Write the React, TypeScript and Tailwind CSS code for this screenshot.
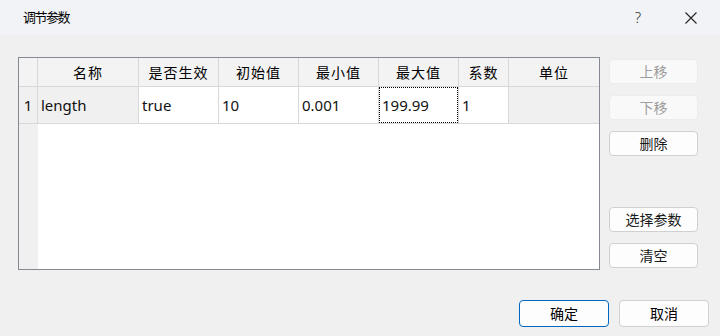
const font = "font-['Noto_Sans','Noto_Sans_CJK_SC',sans-serif]"

const cols = [
  { title: "", w: "w-[19px]" },
  { title: "名称", w: "w-[101px]" },
  { title: "是否生效", w: "w-[80px]" },
  { title: "初始值", w: "w-[80px]" },
  { title: "最小值", w: "w-[80px]" },
  { title: "最大值", w: "w-[80px]" },
  { title: "系数", w: "w-[50px]" },
  { title: "单位", w: "w-[90px]" },
]

const SideButton = ({ label, disabled }: { label: string; disabled?: boolean }) => {
  return (
    <div
      className={
        disabled
          ? "h-[25px] w-[89px] rounded-[4px] border border-[#ececec] bg-[#f9f9f9] text-[#9e9e9e] flex items-center justify-center text-[14px]"
          : "h-[25px] w-[89px] rounded-[4px] border border-[#d0d0d0] bg-[#fdfdfd] text-[#1a1a1a] flex items-center justify-center text-[14px]"
      }
    >
      {label}
    </div>
  )
}

const App = () => {
  return (
    <div className={"w-[720px] h-[336px] bg-[#f0f0f0] flex flex-col text-black " + font}>
      <div className="h-[35px] bg-[#f2f3f7] flex items-center pl-[23px] pr-[23px]">
        <span className="text-[13px] tracking-[-1.5px]">调节参数</span>
        <span className="ml-auto text-[15px] text-[#333] font-light">?</span>
        <svg className="ml-[44px]" width="12" height="12" viewBox="0 0 12 12">
          <path d="M0.5 0.5 L11.5 11.5 M11.5 0.5 L0.5 11.5" stroke="#222" strokeWidth="1.1" />
        </svg>
      </div>

      <div className="flex pl-[18px] pt-[22px]">
        <div className="w-[582px] h-[213px] border border-[#858a92] bg-white flex flex-col">
          <div className="flex h-[29px] bg-[#f3f3f3] border-b border-[#d8d8d8] text-[14px] tracking-[1px]">
            {cols.map((c, i) => (
              <div key={i} className={c.w + " h-full flex items-center justify-center " + (i < cols.length - 1 ? "border-r border-[#d8d8d8]" : "")}>
                {c.title}
              </div>
            ))}
          </div>
          <div className="flex h-[37px] border-b border-[#d8d8d8] text-[15px] text-[#111]">
            <div className="w-[19px] bg-[#f0f0f0] border-r border-[#d8d8d8] flex items-center justify-center">1</div>
            <div className="w-[101px] bg-[#f0f0f0] border-r border-[#d8d8d8] flex items-center pl-[3px]">length</div>
            <div className="w-[80px] border-r border-[#d8d8d8] flex items-center pl-[3px]">true</div>
            <div className="w-[80px] border-r border-[#d8d8d8] flex items-center pl-[3px]">10</div>
            <div className="w-[80px] border-r border-[#d8d8d8] flex items-center pl-[3px]">0.001</div>
            <div className="w-[80px] border-r border-[#d8d8d8] p-0">
              <div className="h-full w-full border border-dotted border-black flex items-center pl-[2px]">199.99</div>
            </div>
            <div className="w-[50px] border-r border-[#d8d8d8] flex items-center pl-[3px]">1</div>
            <div className="w-[90px] bg-[#f0f0f0]"></div>
          </div>
          <div className="flex-1 flex">
            <div className="w-[19px] bg-[#f0f0f0]"></div>
            <div className="flex-1 bg-white"></div>
          </div>
        </div>

        <div className="ml-[9px] pt-[2px] flex flex-col">
          <SideButton label="上移" disabled />
          <div className="h-[11px]"></div>
          <SideButton label="下移" disabled />
          <div className="h-[11px]"></div>
          <SideButton label="删除" />
          <div className="h-[51px]"></div>
          <SideButton label="选择参数" />
          <div className="h-[11px]"></div>
          <SideButton label="清空" />
        </div>
      </div>

      <div className="flex justify-end gap-[10px] pr-[11px] mt-[30px] text-[14px]">
        <div className="h-[27px] w-[90px] rounded-[4px] border border-[#0067c0] bg-[#fdfdfd] flex items-center justify-center">确定</div>
        <div className="h-[27px] w-[90px] rounded-[4px] border border-[#d0d0d0] bg-[#fdfdfd] flex items-center justify-center">取消</div>
      </div>
    </div>
  )
}

export default App
